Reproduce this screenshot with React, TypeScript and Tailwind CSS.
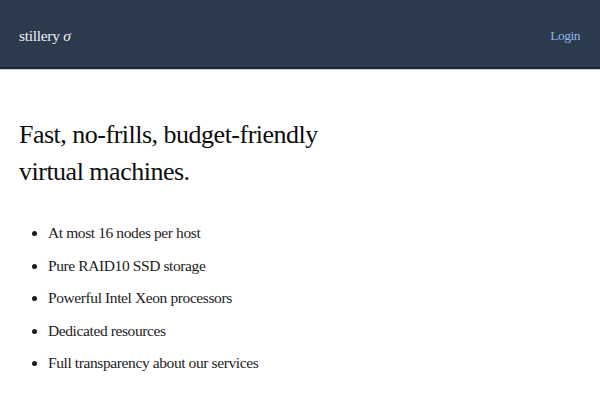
export default function App() {
  const features = [
    'At most 16 nodes per host',
    'Pure RAID10 SSD storage',
    'Powerful Intel Xeon processors',
    'Dedicated resources',
    'Full transparency about our services',
  ];

  return (
    <div className="min-h-screen bg-white font-['Liberation_Serif',serif] text-[#1a1a1a]">
      {/* Navigation */}
      <nav className="h-[69px] bg-[#2b3a4c] border-b-2 border-[#1b2838] shadow-[0_1px_0_#c9d3dc]">
        <div className="flex h-full items-center justify-between px-[19px] pt-[5px]">
          <span className="text-[15.5px] tracking-[-0.3px] text-[#eef1f4]">
            stillery <span className="italic">σ</span>
          </span>
          <a href="#" className="text-[13.5px] tracking-[-0.5px] text-[#8fb4e6] pr-[1px]">
            Login
          </a>
        </div>
      </nav>

      {/* Hero */}
      <main className="px-[19px] pt-[47px]">
        <h1 className="text-[26px] leading-[37px] tracking-[-0.5px] text-[#0d0d0d]">
          Fast, no-frills, budget-friendly
          <br />
          virtual machines.
        </h1>
        <ul className="mt-[27px] list-disc pl-[29px] text-[15.5px] leading-[32.5px] tracking-[-0.4px] text-[#1c1c1c]">
          {features.map((f) => (
            <li key={f}>{f}</li>
          ))}
        </ul>
      </main>
    </div>
  );
}
